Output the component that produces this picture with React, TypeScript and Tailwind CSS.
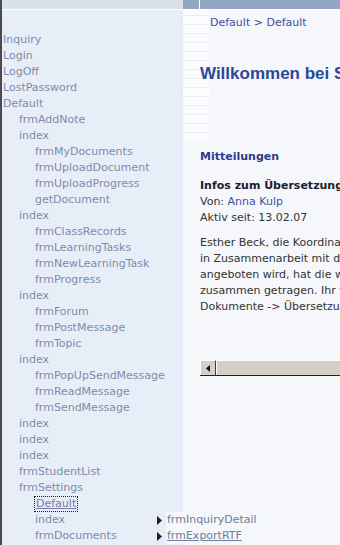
const menu: { label: string; level: number; arrow?: boolean; focus?: boolean; flyout?: boolean }[] = [
  { label: "Inquiry", level: 0 },
  { label: "Login", level: 0 },
  { label: "LogOff", level: 0 },
  { label: "LostPassword", level: 0 },
  { label: "Default", level: 0 },
  { label: "frmAddNote", level: 1 },
  { label: "index", level: 1 },
  { label: "frmMyDocuments", level: 2 },
  { label: "frmUploadDocument", level: 2 },
  { label: "frmUploadProgress", level: 2 },
  { label: "getDocument", level: 2 },
  { label: "index", level: 1 },
  { label: "frmClassRecords", level: 2 },
  { label: "frmLearningTasks", level: 2 },
  { label: "frmNewLearningTask", level: 2 },
  { label: "frmProgress", level: 2 },
  { label: "index", level: 1 },
  { label: "frmForum", level: 2 },
  { label: "frmPostMessage", level: 2 },
  { label: "frmTopic", level: 2 },
  { label: "index", level: 1 },
  { label: "frmPopUpSendMessage", level: 2 },
  { label: "frmReadMessage", level: 2 },
  { label: "frmSendMessage", level: 2 },
  { label: "index", level: 1 },
  { label: "index", level: 1 },
  { label: "index", level: 1 },
  { label: "frmStudentList", level: 1 },
  { label: "frmSettings", level: 1 },
  { label: "Default", level: 2, focus: true },
  { label: "index", level: 2, arrow: true, flyout: true },
  { label: "frmDocuments", level: 2, arrow: true },
];

const indent = ["pl-[1px]", "pl-[17px]", "pl-[33px]"];

const Arrow = () => (
  <svg width="5" height="9" viewBox="0 0 5 9" className="ml-auto mr-[21px] shrink-0">
    <path d="M0 0 L5 4.5 L0 9 Z" fill="#1e1e28" />
  </svg>
);

const MenuRow = ({ item }: { item: (typeof menu)[0] }) => (
  <div className={`relative flex items-center h-4 ${indent[item.level]}`}>
    {item.focus ? (
      <span className="text-[#7478ae] underline outline outline-1 outline-dotted outline-[#222] px-[1px] leading-[14px]">
        {item.label}
      </span>
    ) : (
      <span className="text-[#7d8cab]">{item.label}</span>
    )}
    {item.arrow && <Arrow />}
    {item.flyout && (
      <div className="absolute left-[164px] top-0 z-10 w-[110px] bg-[#f5f7fa] pl-[1px]">
        <div className="h-4 leading-4 text-[#6f7d9c]">frmInquiryDetail</div>
        <div className="h-4 leading-4 text-[#6f7d9c] underline">frmExportRTF</div>
      </div>
    )}
  </div>
);

const paragraph = [
  "Esther Beck, die Koordinatorin des Übersetzungsprojekts,",
  "in Zusammenarbeit mit der Universität, das im Rahmen",
  "angeboten wird, hat die wichtigsten Informationen",
  "zusammen getragen. Ihr findet sie unter",
  "Dokumente -> Übersetzungsprojekt.",
];

export default function App() {
  return (
    <div className="w-[340px] h-[545px] overflow-hidden border-l-2 border-[#4a4a4f] bg-[#f5f7fa] font-['DejaVu_Sans',sans-serif] text-[11px] leading-4">
      {/* top bar */}
      <div className="flex h-[10px] border-b border-white">
        <div className="w-[181px] bg-[#d9e1eb]" />
        <div className="w-[17px] bg-[#93a7c4] border-r border-white" />
        <div className="flex-1 bg-[#93a7c4]" />
      </div>

      <div className="flex h-[535px]">
        {/* navigation */}
        <aside className="w-[181px] shrink-0 bg-[#e8eef8] pt-[22px]">
          {menu.map((item, i) => (
            <MenuRow key={i} item={item} />
          ))}
        </aside>

        {/* content */}
        <main className="flex-1 min-w-0 overflow-hidden bg-[#f5f7fa] bg-[repeating-linear-gradient(180deg,#fbfcfd_0px,#fbfcfd_5px,#e9edf3_5px,#e9edf3_6px,#fbfcfd_6px,#fbfcfd_9px)] bg-[length:26px_130px] bg-no-repeat">
          <div className="pt-[5px] pl-[27px] whitespace-nowrap text-[#3e4fa2]">
            Default <span className="text-[#444a66]">&gt;</span> Default
          </div>

          <h1 className="mt-[33px] pl-[17px] whitespace-nowrap font-['Liberation_Sans',sans-serif] text-[17px] leading-5 font-bold text-[#2b4899]">
            Willkommen bei Studienportal
          </h1>

          <h2 className="mt-[65px] pl-[17px] whitespace-nowrap font-bold text-[#2d3a8a]">Mitteilungen</h2>

          <div className="mt-[13px] pl-[17px] whitespace-nowrap text-[#333333]">
            <div className="font-bold text-[#1c1c2e]">Infos zum Übersetzungsprojekt</div>
            <div>
              Von: <span className="text-[#4050a0]">Anna Kulp</span>
            </div>
            <div>Aktiv seit: 13.02.07</div>
            <div className="mt-[9px]">
              {paragraph.map((line, i) => (
                <div key={i}>{line}</div>
              ))}
            </div>
          </div>

          {/* horizontal scrollbar */}
          <div className="mt-[45px] ml-[17px] flex h-4 w-[200px] border-b border-[#22222e]">
            <div className="flex w-4 items-center justify-center border-t border-l border-white border-r border-r-[#404040] bg-[#d4d0c8]">
              <svg width="4" height="7" viewBox="0 0 4 7">
                <path d="M4 0 L0 3.5 L4 7 Z" fill="#111" />
              </svg>
            </div>
            <div className="flex-1 border-t border-l border-white bg-[#d4d0c8]" />
          </div>
        </main>
      </div>
    </div>
  );
}
